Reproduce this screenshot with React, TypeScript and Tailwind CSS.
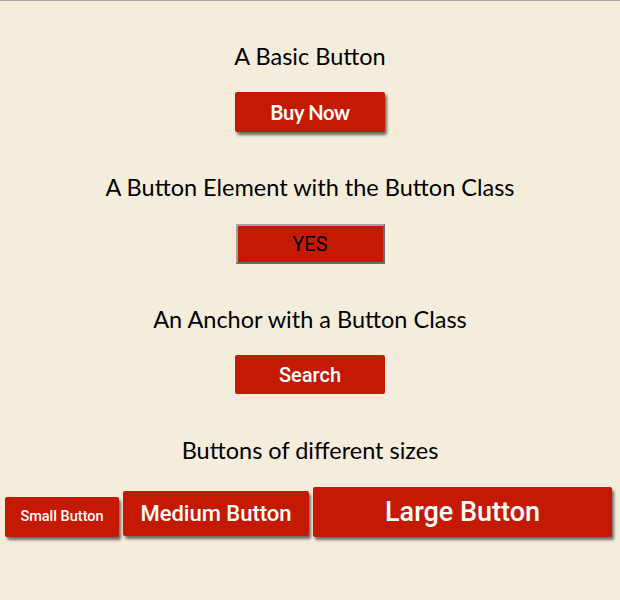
import React from "react";

export default function App() {
  const heading = "text-[23.5px] leading-[28px] text-black text-center";
  return (
    <div className="min-h-[600px] w-full bg-[#f5eddc] border-t border-[#a8a8a8] flex flex-col items-center" style={{ fontFamily: "Lato, 'Liberation Sans', sans-serif" }}>
      <h2 className={`${heading} mt-[41px]`}>A Basic Button</h2>
      <button className="mt-[22px] w-[150px] h-[40px] bg-[#c41a04] text-white text-[20px] font-bold tracking-[-0.3px] rounded-[2px] shadow-[2px_3px_3px_rgba(0,0,0,0.55)]" style={{ fontFamily: "Lato, sans-serif" }}>
        Buy Now
      </button>
      <h2 className={`${heading} mt-[41px]`}>A Button Element with the Button Class</h2>
      <button className="mt-[23px] w-[149px] h-[40px] bg-[#c41a04] text-black text-[20px] border-2 border-t-[#a0a0a0] border-l-[#a0a0a0] border-r-[#6b6b6b] border-b-[#6b6b6b]" style={{ fontFamily: "Roboto, sans-serif" }}>
        YES
      </button>
      <h2 className={`${heading} mt-[41px]`}>An Anchor with a Button Class</h2>
      <a className="mt-[22px] w-[150px] h-[39px] bg-[#c41a04] text-white text-[20px] font-medium rounded-[2px] flex items-center justify-center" style={{ fontFamily: "Roboto, sans-serif" }}>
        Search
      </a>
      <h2 className={`${heading} mt-[42px]`}>Buttons of different sizes</h2>
      <div className="mt-[23px] mr-[3px] flex items-baseline gap-[4px]" style={{ fontFamily: "Roboto, sans-serif" }}>
        <button className="w-[114px] h-[40px] bg-[#c41a04] text-white text-[14.5px] font-medium rounded-[2px] shadow-[2px_3px_3px_rgba(0,0,0,0.55)]">Small Button</button>
        <button className="w-[186px] h-[45px] bg-[#c41a04] text-white text-[22px] font-medium rounded-[2px] shadow-[2px_3px_3px_rgba(0,0,0,0.55)]">Medium Button</button>
        <button className="w-[299px] h-[50px] bg-[#c41a04] text-white text-[27px] font-medium rounded-[2px] shadow-[2px_3px_3px_rgba(0,0,0,0.55)]">Large Button</button>
      </div>
    </div>
  );
}
